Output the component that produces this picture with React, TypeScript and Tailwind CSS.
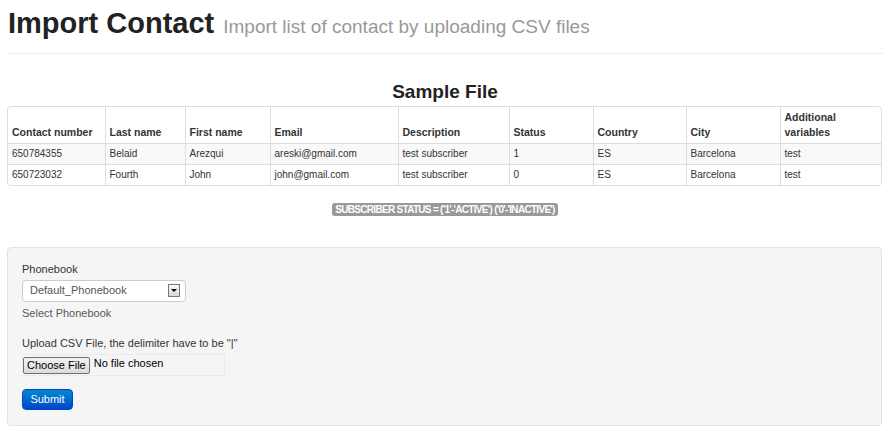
import React from 'react';

const columns = [
  { label: 'Contact number', w: 'w-[97px]' },
  { label: 'Last name', w: 'w-[80px]' },
  { label: 'First name', w: 'w-[85px]' },
  { label: 'Email', w: 'w-[128px]' },
  { label: 'Description', w: 'w-[111px]' },
  { label: 'Status', w: 'w-[84px]' },
  { label: 'Country', w: 'w-[93px]' },
  { label: 'City', w: 'w-[94px]' },
  { label: 'Additional variables', w: 'w-[103px]' },
];

const rows = [
  ['650784355', 'Belaid', 'Arezqui', 'areski@gmail.com', 'test subscriber', '1', 'ES', 'Barcelona', 'test'],
  ['650723032', 'Fourth', 'John', 'john@gmail.com', 'test subscriber', '0', 'ES', 'Barcelona', 'test'],
];

export default function App() {
  return (
    <div className="w-[890px] h-[431px] bg-white text-[#333] font-['Liberation_Sans',Arial,sans-serif] px-[7px] overflow-hidden">
      {/* page header */}
      <div className="pt-[5px] pb-[11px] border-b border-[#eee] flex items-baseline gap-[9px] pl-px">
        <h1 className="text-[29px] leading-[36px] font-bold text-[#222]">Import Contact</h1>
        <span className="text-[19px] text-[#999]">Import list of contact by uploading CSV files</span>
      </div>

      <h3 className="text-center text-[19px] font-bold leading-[24px] mt-[26px] mb-[2px] text-[#222]">Sample File</h3>

      <div className="w-[875px] border border-[#ddd] rounded-[4px] overflow-hidden">
        <table className="w-full table-fixed border-collapse">
          <colgroup>
            {columns.map((c) => (
              <col key={c.label} className={c.w} />
            ))}
          </colgroup>
          <thead>
            <tr>
              {columns.map((c, i) => (
                <th
                  key={c.label}
                  className={`text-left align-bottom font-bold text-[10.5px] leading-[15px] pt-[3px] pb-[3px] px-[4px] ${i > 0 ? 'border-l border-[#ddd]' : ''}`}
                >
                  {c.label === 'Additional variables' ? (
                    <>
                      Additional
                      <br />
                      variables
                    </>
                  ) : (
                    c.label
                  )}
                </th>
              ))}
            </tr>
          </thead>
          <tbody>
            {rows.map((r, ri) => (
              <tr key={ri} className={ri === 0 ? 'bg-[#f9f9f9]' : 'bg-white'}>
                {r.map((cell, ci) => (
                  <td
                    key={ci}
                    className={`border-t border-[#ddd] text-[10px] leading-[12px] py-[4px] px-[4px] whitespace-nowrap ${ci > 0 ? 'border-l' : ''}`}
                  >
                    {cell}
                  </td>
                ))}
              </tr>
            ))}
          </tbody>
        </table>
      </div>

      <div className="flex justify-center mt-[17px]">
        <span className="bg-[#999] text-white font-bold text-[10px] leading-[13px] px-[3px] rounded-[3px] tracking-[-0.7px]">
          SUBSCRIBER STATUS = ('1'-'ACTIVE') ('0'-'INACTIVE')
        </span>
      </div>

      {/* upload form */}
      <div className="mt-[31px] w-[875px] h-[179px] bg-[#f5f5f5] border border-[#e3e3e3] rounded-[4px] px-[14px] pt-[14px]">
        <div className="text-[11px] leading-[14px] text-[#333]">Phonebook</div>
        <div className="mt-[4px] w-[164px] h-[22px] bg-white border border-[#ccc] rounded-[4px] flex items-center justify-between pl-[7px] pr-[5px]">
          <span className="text-[11px] text-[#555]">Default_Phonebook</span>
          <span className="w-[12px] h-[13px] border border-[#777] bg-gradient-to-b from-[#fafafa] to-[#d8d8d8] flex items-center justify-center">
            <span className="w-0 h-0 border-l-[3px] border-r-[3px] border-t-[3px] border-l-transparent border-r-transparent border-t-black" />
          </span>
        </div>
        <div className="mt-[4px] text-[11px] leading-[14px] text-[#595959]">Select Phonebook</div>

        <div className="mt-[16px] text-[11px] leading-[14px] text-[#333]">Upload CSV File, the delimiter have to be "|"</div>
        <div className="mt-[4px] w-[203px] h-[22px] border border-[#ebebeb] flex items-start pt-[2px]">
          <span className="h-[17px] px-[3px] border border-[#707070] rounded-[2px] bg-gradient-to-b from-[#f2f2f2] to-[#dcdcdc] text-[11px] leading-[15px] text-black">
            Choose File
          </span>
          <span className="ml-[4px] text-[11px] leading-[12px] text-black">No file chosen</span>
        </div>

        <button className="mt-[13px] h-[21px] w-[51px] rounded-[4px] bg-gradient-to-b from-[#0088cc] to-[#0044cc] border border-[#0044cc] text-white text-[11px]">
          Submit
        </button>
      </div>
    </div>
  );
}
